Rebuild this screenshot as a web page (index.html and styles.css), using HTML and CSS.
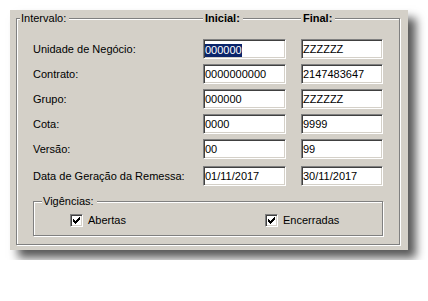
FILE: index.html
```html
<!DOCTYPE html>
<html lang="pt">
<head>
<meta charset="utf-8">
<title>Intervalo</title>
<link rel="stylesheet" href="styles.css">
</head>
<body>
<div class="panel">
  <div class="group">
    <div class="group-head">
      <span class="legend legend-main">Intervalo:</span>
      <span class="legend legend-bold">Inicial:</span>
      <span class="legend legend-bold">Final:</span>
    </div>
    <div class="rows">
      <span class="label">Unidade de Negócio:</span>
      <div class="field"><span class="sel">000000</span></div>
      <div class="field">ZZZZZZ</div>

      <span class="label">Contrato:</span>
      <div class="field">0000000000</div>
      <div class="field">2147483647</div>

      <span class="label">Grupo:</span>
      <div class="field">000000</div>
      <div class="field">ZZZZZZ</div>

      <span class="label">Cota:</span>
      <div class="field">0000</div>
      <div class="field">9999</div>

      <span class="label">Versão:</span>
      <div class="field">00</div>
      <div class="field">99</div>

      <span class="label late">Data de Geração da Remessa:</span>
      <div class="field late">01/11/2017</div>
      <div class="field late">30/11/2017</div>
    </div>
    <div class="group sub">
      <div class="sub-head"><span class="legend legend-sub">Vigências:</span></div>
      <div class="checks">
        <div class="check">
          <span class="cb"><svg width="7" height="7" viewBox="0 0 7 7"><path d="M6 0h1v1h-1z M5 1h2v1h-2z M0 2h1v1h-1z M4 2h3v1h-3z M0 3h2v1h-2z M3 3h3v1h-3z M0 4h5v1h-5z M1 5h3v1h-3z M2 6h1v1h-1z" fill="#000"/></svg></span>
          <span>Abertas</span>
        </div>
        <div class="check">
          <span class="cb"><svg width="7" height="7" viewBox="0 0 7 7"><path d="M6 0h1v1h-1z M5 1h2v1h-2z M0 2h1v1h-1z M4 2h3v1h-3z M0 3h2v1h-2z M3 3h3v1h-3z M0 4h5v1h-5z M1 5h3v1h-3z M2 6h1v1h-1z" fill="#000"/></svg></span>
          <span>Encerradas</span>
        </div>
      </div>
    </div>
  </div>
</div>
</body>
</html>
```
FILE: styles.css
```css
body {
  margin: 0;
  background: #fff;
  font: 11px "Liberation Sans", Arial, sans-serif;
  color: #000;
}

.panel {
  margin: 10px;
  width: 398px;
  height: 240px;
  box-sizing: border-box;
  background: #d4d0c8;
  padding: 8px 0 0 6px;
  box-shadow: 8px 8px 9px rgba(0, 0, 0, 0.65);
}

.group {
  width: 384px;
  height: 227px;
  box-sizing: border-box;
  border: 1px solid #808080;
  box-shadow: 1px 1px 0 #fff, inset 1px 1px 0 #fff;
}

.group-head {
  display: grid;
  grid-template-columns: 170px 98px 82px;
  margin: -7px 0 0 16px;
  line-height: 13px;
}

.legend {
  justify-self: start;
  background: #d4d0c8;
  line-height: 13px;
}

.legend-main {
  margin-left: -13px;
  padding: 0 3px 0 1px;
}

.legend-bold {
  font-weight: bold;
  padding: 0 3px 0 2px;
}

.rows {
  display: grid;
  grid-template-columns: 155px 83px 82px;
  grid-template-rows: repeat(5, 20px) 22px;
  column-gap: 15px;
  row-gap: 5px;
  margin: 14px 0 0 16px;
  align-items: center;
}

.label {
  line-height: 13px;
  white-space: nowrap;
}

.late {
  margin-top: 2px;
}

.field {
  box-sizing: border-box;
  height: 20px;
  border: 1px solid;
  border-color: #808080 #fff #fff #808080;
  box-shadow: inset 1px 1px 0 #404040, inset -1px -1px 0 #d4d0c8;
  background: #fff;
  padding: 0 1px;
  line-height: 18px;
  white-space: nowrap;
  overflow: hidden;
}

.sel {
  display: inline-block;
  background: #0a246a;
  color: #fff;
  line-height: 13px;
  vertical-align: middle;
}

.sub {
  width: 350px;
  height: 35px;
  margin: 15px 0 0 16px;
}

.sub-head {
  display: flex;
  margin: -7px 0 0 8px;
}

.legend-sub {
  padding: 0 3px 0 1px;
}

.checks {
  display: grid;
  grid-template-columns: 195px 1fr;
  padding-left: 36px;
  margin-top: 6px;
}

.check {
  display: flex;
  align-items: center;
  gap: 5px;
  line-height: 13px;
}

.cb {
  width: 13px;
  height: 13px;
  box-sizing: border-box;
  border: 1px solid;
  border-color: #808080 #fff #fff #808080;
  box-shadow: inset 1px 1px 0 #404040, inset -1px -1px 0 #d4d0c8;
  background: #fff;
  display: flex;
  align-items: center;
  justify-content: center;
}

.cb svg {
  display: block;
}
```
